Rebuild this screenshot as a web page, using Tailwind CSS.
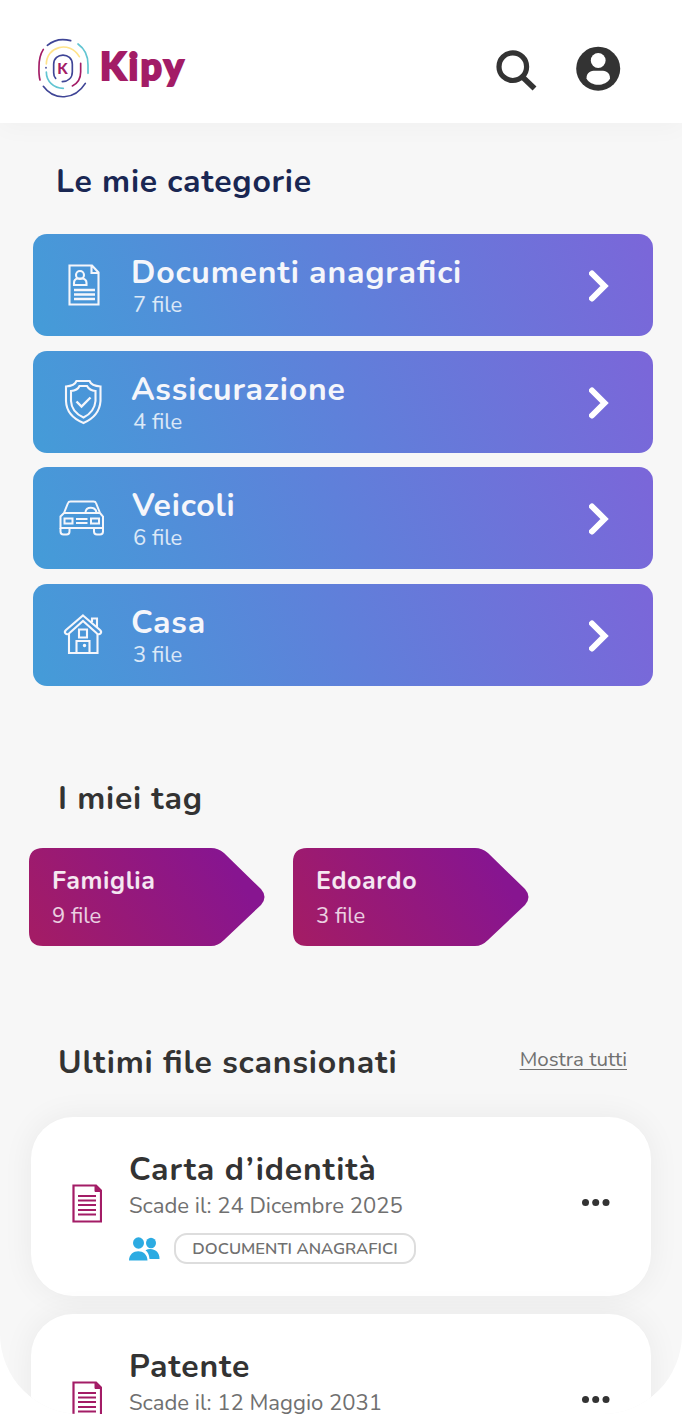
<!DOCTYPE html>
<html lang="it">
<head>
    <meta charset="UTF-8">
    <meta name="viewport" content="width=device-width, initial-scale=1.0">
    <title>Kipy</title>
    <script src="https://cdn.jsdelivr.net/npm/@tailwindcss/browser@4"></script>
</head>
<body class="bg-white font-['Nunito','Lato',sans-serif] text-[#333333] [font-feature-settings:'liga'_1]">
    <div class="flex h-[1414px] w-[682px] flex-col overflow-hidden rounded-b-[80px] bg-[#f7f7f7]">
        <!-- Header -->
        <header class="flex h-[123px] shrink-0 items-start justify-between bg-white pl-9 pr-[61px] shadow-[0_4px_24px_rgba(0,0,0,0.03)]">
            <div class="flex pt-9">
                <svg class="h-16 w-[55px]" viewBox="48 48 165 192" fill="none" stroke-width="5" stroke-linecap="round">
                    <path d="M82 76Q112 51 152 62" stroke="#3f4596"/>
                    <path d="M174 72Q205 94 204 135V160" stroke="#62c5d2"/>
                    <path d="M70 88Q57 108 57 140Q56 165 60 180" stroke="#a31c66"/>
                    <path d="M70 199C102 243 164 241 196 190" stroke="#3f4596"/>
                    <path d="M79 132C79 80 148 60 178 110" stroke="#ffe38a"/>
                    <path d="M78 143V144" stroke="#3f4596"/>
                    <path d="M79 156C79 184 101 205 130 205" stroke="#62c5d2"/>
                    <path d="M182 130V156C182 177 173 190 157 198" stroke="#a31c66"/>
                    <path d="M107 175Q101 169 101 158V133C101 96 157 96 157 133V155C157 174 144 184 127 185" stroke="#3f4596"/>
                    <text x="112" y="162" font-size="45" font-weight="900" fill="#a31c66" font-family="Lato">K</text>
                </svg>
                <span class="pl-[9px] pt-[6px] font-['Lato'] text-[37.5px] leading-[48px] font-black tracking-[2.4px] text-[#a31c66] [-webkit-text-stroke:2px_#a31c66]">Kipy</span>
            </div>
            <div class="flex items-start gap-[38px] pt-[46px]">
                <svg class="mt-[3px] h-[42px] w-[42px]" viewBox="0 0 42 42" fill="none" stroke="#333333">
                    <circle cx="16.800" cy="17.700" r="13.800" stroke-width="5.200"/>
                    <path d="M27 28.500L38.500 39.500" stroke-width="5.600"/>
                </svg>
                <svg class="h-[45px] w-[45px]" viewBox="0 0 45 45">
                    <circle cx="22.200" cy="22.700" r="22" fill="#333333"/>
                    <circle cx="22.200" cy="14.500" r="7.400" fill="#fff"/>
                    <path d="M10.500 32.500C10.500 26 15 24.800 19 24.800H25.500C29.500 24.800 34 26 34 32.500C32 36.500 27 38.800 22.200 38.800C17.500 38.800 12.500 36.500 10.500 32.500Z" fill="#fff"/>
                </svg>
            </div>
        </header>

        <!-- Categories -->
        <section class="pl-[33px] pr-[29px] pt-[39px]">
            <h2 class="pl-[23px] text-[32px] leading-10 font-bold tracking-[0.75px] text-[#1a2753]">Le mie categorie</h2>
            <div class="flex flex-col gap-[14.5px] pt-8 text-[#f5f6fb]">
                <a class="flex h-[102px] rounded-[14px] bg-[linear-gradient(70deg,#449cd8,#5f80da_50%,#7b66d9)]">
                    <svg class="mt-7 ml-7 h-[46px] w-[46px] shrink-0" viewBox="0 0 46 46" fill="none" stroke="currentColor" stroke-width="2.100">
                        <path d="M8.500 3.500H31L37.500 10.500V42.500H8.500ZM30.500 4V11H37.500"/>
                        <circle cx="19" cy="13" r="4"/>
                        <path d="M13 23V21Q13 17 17 16.500H21Q25.500 17 25.500 21V23Z"/>
                        <path d="M13 28H34M13 32.500H34M13 37H34" stroke-width="2.400"/>
                    </svg>
                    <div class="grow pl-6 pt-[21px]">
                        <div class="text-[32px] leading-9 font-bold tracking-[0.8px]">Documenti anagrafici</div>
                        <div class="pl-[2px] text-[22px] leading-7 text-white/80">7 file</div>
                    </div>
                    <svg class="mt-9 mr-11 h-8 w-5" viewBox="0 0 20 32" fill="none" stroke="#fff" stroke-width="6"><path d="M3 3.500L15.500 16L3 28.500" stroke-linecap="round"/></svg>
                </a>
                <a class="flex h-[102px] rounded-[14px] bg-[linear-gradient(70deg,#449cd8,#5f80da_50%,#7b66d9)]">
                    <svg class="mt-7 ml-7 h-[46px] w-[46px] shrink-0" viewBox="0.500 0 46 46" fill="none" stroke="currentColor" stroke-width="2.100">
                        <path d="M23 2H29Q31 7 40 7.500V22Q39 37 23 44Q6 37 5.500 22V7.500Q14 7 16 2Z"/>
                        <path d="M23 7H26.500Q29 11.500 35 12V22Q34 33 23 38.500Q11 33 10.500 22V12Q17 11.500 19 7Z"/>
                        <path d="M16 22.500L21 27.500L30 18.500" stroke-width="2.400"/>
                    </svg>
                    <div class="grow pl-6 pt-[21px]">
                        <div class="text-[32px] leading-9 font-bold tracking-[0.8px]">Assicurazione</div>
                        <div class="pl-[2px] text-[22px] leading-7 text-white/80">4 file</div>
                    </div>
                    <svg class="mt-9 mr-11 h-8 w-5" viewBox="0 0 20 32" fill="none" stroke="#fff" stroke-width="6"><path d="M3 3.500L15.500 16L3 28.500" stroke-linecap="round"/></svg>
                </a>
                <a class="flex h-[102px] rounded-[14px] bg-[linear-gradient(70deg,#449cd8,#5f80da_50%,#7b66d9)]">
                    <svg class="mt-7 ml-[26px] h-[46px] w-12 shrink-0" viewBox="0.500 0 48 46" fill="none" stroke="currentColor" stroke-width="2">
                        <path d="M5.500 18L9.500 8Q10 6.500 12 6.500H35Q37 6.500 37.500 8L41.500 18M5.500 18H41.500L44.500 21.500V33H2V21.500ZM27 17.500C27 11 37 11 38 17.500"/>
                        <path d="M2 33V36.500Q2 39.500 5 39.500H8Q11 39.500 11 36.500V33M35.500 33V36.500Q35.500 39.500 38.500 39.500H41.500Q44.500 39.500 44.500 36.500V33M6 23.500H14V28.500H6ZM32.500 23.500H40.500V28.500H32.500ZM17.500 24H29M17.500 28H29"/>
                    </svg>
                    <div class="grow pl-6 pt-[21px]">
                        <div class="pl-px text-[32px] leading-9 font-bold tracking-[0.8px]">Veicoli</div>
                        <div class="pl-[2px] text-[22px] leading-7 text-white/80">6 file</div>
                    </div>
                    <svg class="mt-9 mr-11 h-8 w-5" viewBox="0 0 20 32" fill="none" stroke="#fff" stroke-width="6"><path d="M3 3.500L15.500 16L3 28.500" stroke-linecap="round"/></svg>
                </a>
                <a class="flex h-[102px] rounded-[14px] bg-[linear-gradient(70deg,#449cd8,#5f80da_50%,#7b66d9)]">
                    <svg class="mt-7 ml-7 h-[46px] w-[46px] shrink-0" viewBox="0.500 0 46 46" fill="none" stroke="currentColor" stroke-width="2.100">
                        <path d="M22.500 3.500L39.500 18Q41.500 20 40 21.500Q38.500 23 36.500 21.500L22.500 9L8.500 21.500Q6.500 23 5 21.500Q3.500 20 5.500 18Z"/>
                        <path d="M8.500 22V41H37V22M31.500 10V6.500H36.500V15M18.500 17.500H26.500V25.500H18.500ZM16 41V29H29V41"/>
                        <circle cx="24" cy="33.500" r="0.700" fill="currentColor"/>
                    </svg>
                    <div class="grow pl-6 pt-[21px]">
                        <div class="text-[32px] leading-9 font-bold tracking-[0.8px]">Casa</div>
                        <div class="pl-[2px] text-[22px] leading-7 text-white/80">3 file</div>
                    </div>
                    <svg class="mt-9 mr-11 h-8 w-5" viewBox="0 0 20 32" fill="none" stroke="#fff" stroke-width="6"><path d="M3 3.500L15.500 16L3 28.500" stroke-linecap="round"/></svg>
                </a>
            </div>
        </section>

        <!-- Tags -->
        <section class="pl-[29px] pt-[93px]">
            <h2 class="pl-[29px] text-[32px] leading-10 font-bold tracking-[0.75px]">I miei tag</h2>
            <div class="flex gap-7 pt-[29px]">
                <div class="grid h-[98px] w-[236px]">
                    <svg class="col-start-1 row-start-1 h-[98px] w-[236px]" viewBox="0 0 236 98">
                        <defs>
                            <linearGradient id="tagGradient" gradientUnits="userSpaceOnUse" x1="20" y1="110" x2="190" y2="0">
                                <stop offset="0" stop-color="#a31c66"/>
                                <stop offset="1" stop-color="#871590"/>
                            </linearGradient>
                        </defs>
                        <path d="M14 0H182Q189 0 195 5L232 41Q239 49 232 57L195 92Q189 98 182 98H14Q0 98 0 84V14Q0 0 14 0Z" fill="url(#tagGradient)"/>
                    </svg>
                    <div class="col-start-1 row-start-1 pl-[23px] pt-[17px]">
                        <div class="text-[25px] leading-8 font-bold tracking-[0.6px] text-white/90">Famiglia</div>
                        <div class="pt-[5px] text-[22px] leading-7 text-white/80">9 file</div>
                    </div>
                </div>
                <div class="grid h-[98px] w-[236px]">
                    <svg class="col-start-1 row-start-1 h-[98px] w-[236px]" viewBox="0 0 236 98">
                        <path d="M14 0H182Q189 0 195 5L232 41Q239 49 232 57L195 92Q189 98 182 98H14Q0 98 0 84V14Q0 0 14 0Z" fill="url(#tagGradient)"/>
                    </svg>
                    <div class="col-start-1 row-start-1 pl-[23px] pt-[17px]">
                        <div class="text-[25px] leading-8 font-bold tracking-[0.6px] text-white/90">Edoardo</div>
                        <div class="pt-[5px] text-[22px] leading-7 text-white/80">3 file</div>
                    </div>
                </div>
            </div>
        </section>

        <!-- Latest files -->
        <section class="pl-[31px] pr-[31px] pt-[97px]">
            <div class="flex justify-between pl-[27px] pr-6">
                <h2 class="text-[32px] leading-10 font-bold tracking-[0.85px]">Ultimi file scansionati</h2>
                <a class="pt-[2px] text-[20.6px] leading-7 text-[#707070] underline decoration-1 underline-offset-[3px]">Mostra tutti</a>
            </div>
            <div class="flex flex-col gap-[18px] pt-[34px]">
                <article class="flex h-[179px] rounded-[42px] bg-white pl-[41px] pr-[41px] shadow-[0_0_32px_rgba(0,0,0,0.06)]">
                    <svg class="mt-[66px] h-10 w-[30px]" viewBox="0 0 30 40" fill="none" stroke="#a31c66" stroke-width="2.200">
                        <path d="M1.500 2.500H24L29 7.500V38.500H1.500Z"/>
                        <path d="M23 2.500L29 8.500H23Z" fill="#a31c66" stroke-width="1"/>
                        <path d="M6 13H24M6 17.500H24M6 22H24M6 27H24M6 31.500H24"/>
                    </svg>
                    <div class="grow pl-[27px] pt-[35px]">
                        <div class="text-[32px] leading-9 font-bold tracking-[0.85px]">Carta d’identità</div>
                        <div class="pt-[4px] text-[22.1px] leading-7 text-[#707070]">Scade il: 24 Dicembre 2025</div>
                        <div class="flex pt-[13px]">
                            <svg class="mt-[4px] h-6 w-[31px]" viewBox="0 0 31 24" fill="#2cabe2">
                                <ellipse cx="9.500" cy="6" rx="5.500" ry="5.800"/>
                                <ellipse cx="22" cy="6" rx="5" ry="5.300"/>
                                <path d="M0 23.500C0 11 18.500 11 18.500 23.500ZM16.500 13.300C22 10 31 13 30.500 22H20.500Q20 16 16.500 13.300Z"/>
                            </svg>
                            <span class="ml-[14px] flex h-[31px] w-[242px] items-center justify-center rounded-[13px] border-2 border-[#dddddd] pt-[3px] text-[16.6px] font-semibold text-[#707070]">DOCUMENTI ANAGRAFICI</span>
                        </div>
                    </div>
                    <svg class="mt-[81px] h-2 w-[29px]" viewBox="0 0 29 8" fill="#333333"><circle cx="4.500" cy="4.500" r="3.500"/><circle cx="14.700" cy="4.500" r="3.500"/><circle cx="25" cy="4.500" r="3.500"/></svg>
                </article>
                <article class="flex h-[179px] rounded-[42px] bg-white pl-[41px] pr-[41px] shadow-[0_0_32px_rgba(0,0,0,0.06)]">
                    <svg class="mt-[66px] h-10 w-[30px]" viewBox="0 0 30 40" fill="none" stroke="#a31c66" stroke-width="2.200">
                        <path d="M1.500 2.500H24L29 7.500V38.500H1.500Z"/>
                        <path d="M23 2.500L29 8.500H23Z" fill="#a31c66" stroke-width="1"/>
                        <path d="M6 13H24M6 17.500H24M6 22H24M6 27H24M6 31.500H24"/>
                    </svg>
                    <div class="grow pl-[27px] pt-[35px]">
                        <div class="text-[32px] leading-9 font-bold tracking-[0.85px]">Patente</div>
                        <div class="pt-[4px] text-[22.1px] leading-7 text-[#707070]">Scade il: 12 Maggio 2031</div>
                    </div>
                    <svg class="mt-[81px] h-2 w-[29px]" viewBox="0 0 29 8" fill="#333333"><circle cx="4.500" cy="4.500" r="3.500"/><circle cx="14.700" cy="4.500" r="3.500"/><circle cx="25" cy="4.500" r="3.500"/></svg>
                </article>
            </div>
        </section>
    </div>
</body>
</html>
